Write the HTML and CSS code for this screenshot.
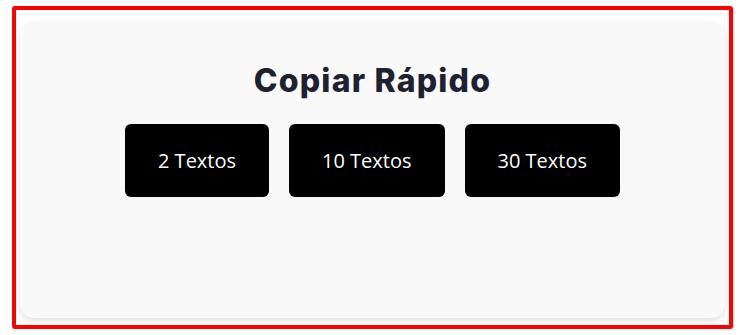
FILE: index.html
```html
<!DOCTYPE html>
<html lang="pt">
<head>
<meta charset="utf-8">
<title>Copiar Rápido</title>
<link rel="stylesheet" href="styles.css">
</head>
<body>
<div class="frame">
  <section class="card">
    <h2 class="title">Copiar Rápido</h2>
    <div class="actions">
      <button class="btn">2 Textos</button>
      <button class="btn">10 Textos</button>
      <button class="btn">30 Textos</button>
    </div>
  </section>
</div>
</body>
</html>
```

FILE: styles.css
```css
html, body {
  margin: 0;
  padding: 0;
  background: #ffffff;
}

body {
  font-family: "Open Sans", "Noto Sans", sans-serif;
}

.frame {
  box-sizing: border-box;
  width: 721px;
  height: 323px;
  margin: 6px 0 0 12px;
  border: 4px solid #ff0000;
  border-radius: 3px;
  padding: 12px 4px 7px 4px;
  background: #ffffff;
  box-shadow: 1px 1px 2px rgba(0, 0, 0, 0.12);
}

.card {
  box-sizing: border-box;
  height: 100%;
  background: #f9f9f9;
  border-radius: 14px;
  box-shadow: 0 3px 7px rgba(0, 0, 0, 0.12);
  padding-top: 39px;
  display: flex;
  flex-direction: column;
  align-items: center;
}

.title {
  margin: 0;
  font-family: "Inter", "Noto Sans", sans-serif;
  font-weight: 800;
  font-size: 32px;
  letter-spacing: 1.2px;
  color: #1e2230;
  line-height: 39px;
}

.actions {
  margin-top: 24px;
  display: flex;
  gap: 20px;
}

.btn {
  font-family: "Open Sans", "Noto Sans", sans-serif;
  font-size: 20px;
  line-height: 27px;
  color: #ffffff;
  background: #000000;
  border: none;
  border-radius: 6px;
  padding: 23px 33px;
  cursor: pointer;
}
```
